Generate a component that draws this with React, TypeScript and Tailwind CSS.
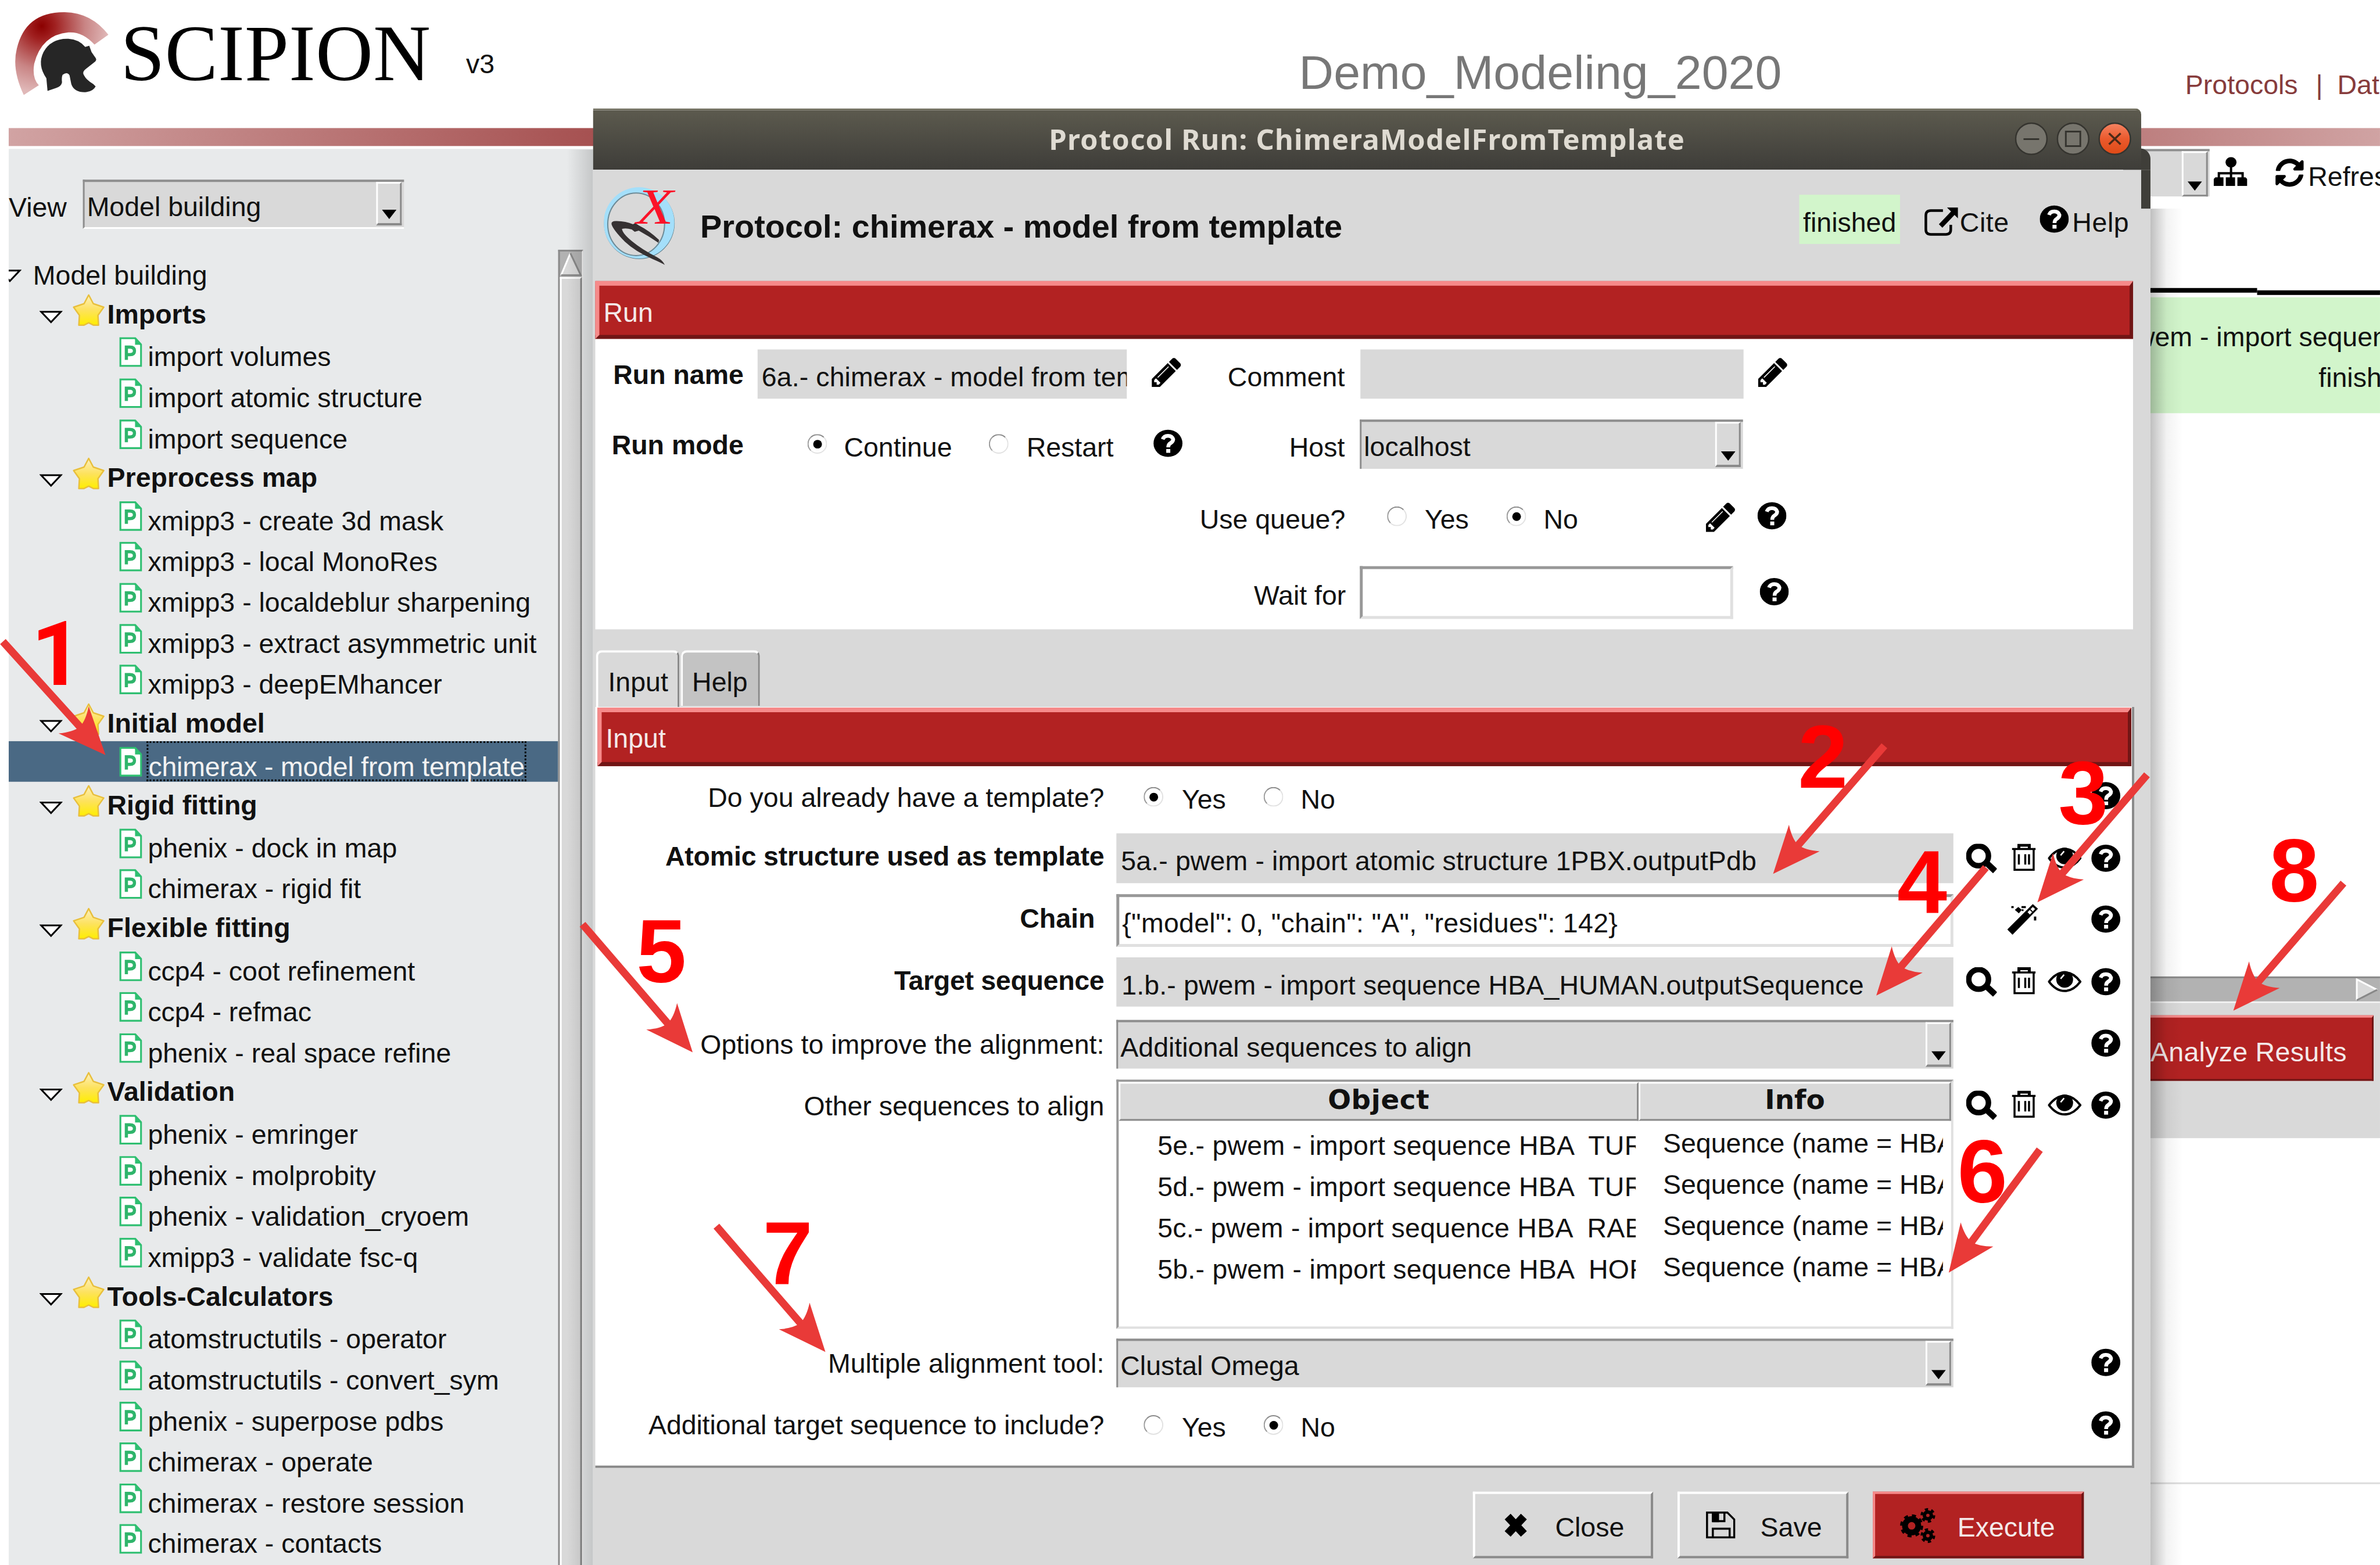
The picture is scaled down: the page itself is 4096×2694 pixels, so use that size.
import React from "react";
import { FaSyncAlt } from "react-icons/fa";

type Cls = { className?: string };

/* ---------- icons ---------- */

const Help = ({ className = "" }: Cls) => (
  <svg viewBox="0 -2 50 50" className={`h-[50px] w-[50px] shrink-0 ${className}`}>
    <ellipse cx="25" cy="23" rx="25" ry="23.500" fill="#000" />
    <path d="M16 16Q18 10 25 10T34 16Q34 20 29 23Q25.500 25 25.500 30" fill="none" stroke="#fff" strokeWidth="6.500" />
    <path d="M22 33H29V39.500H22Z" fill="#fff" />
  </svg>
);

const Pencil = ({ className = "" }: Cls) => (
  <svg viewBox="128 128 1536 1536" className={`h-[51px] w-[51px] shrink-0 ${className}`}>
    <path
      fill="#000"
      d="M491 1536l91-91-235-235-91 91v107h128v128h107zm523-928q0-22-22-22-10 0-17 7l-542 542q-7 7-7 17 0 22 22 22 10 0 17-7l542-542q7-7 7-17zm-54-192l416 416-832 832h-416v-416zm683 96q0 53-37 90l-166 166-416-416 166-165q36-38 90-38 53 0 91 38l235 234q37 39 37 91z"
    />
  </svg>
);

const Search = ({ className = "" }: Cls) => (
  <svg viewBox="0 0 53 51" className={`h-[51px] w-[53px] shrink-0 ${className}`} fill="none" stroke="#000">
    <ellipse cx="21.500" cy="21" rx="17" ry="17" strokeWidth="9.500" />
    <path d="M34 32L50 47" strokeWidth="10.500" />
  </svg>
);

const Trash = ({ className = "" }: Cls) => (
  <svg viewBox="0 0 41 47" className={`h-[47px] w-[41px] shrink-0 ${className}`} fill="none" stroke="#000" strokeWidth="3.500">
    <path d="M0 9H41M4.500 9V45H37.500V9M12 18V36M23 18V36M29.500 18V36" />
    <path d="M12 9V2.500H30V9" strokeWidth="5" />
  </svg>
);

const Eye = ({ className = "" }: Cls) => (
  <svg viewBox="0 0 58 40" className={`h-[40px] w-[58px] shrink-0 ${className}`}>
    <path d="M2 20Q14 4 29 4T56 20Q44 36 29 36T2 20Z" fill="#fff" stroke="#000" strokeWidth="4" />
    <circle cx="29" cy="16" r="14.500" fill="#000" />
    <path d="M22 15L28 8" stroke="#fff" strokeWidth="2.5" fill="none" />
  </svg>
);

const Wand = ({ className = "" }: Cls) => (
  <svg viewBox="0 0 53 53" className={`h-[53px] w-[53px] shrink-0 ${className}`}>
    <path d="M0 44L44 0L53 8L9 53Z" fill="#000" />
    <path d="M35 14L44 5L48 8.500L39 18Z" fill="#fff" />
    <path d="M39.500 9.500L43.500 13.500" stroke="#000" strokeWidth="2" />
    <path d="M19 5L25 10L20 16L13 10ZM7 3.500H11V7H7ZM24.500 3.500H32V7H24.500ZM46 21.500H50V28.500H46ZM25 9H28V12H25Z" fill="#000" />
  </svg>
);

const Gears = () => (
  <svg viewBox="0 0 62 62" className="h-[62px] w-[62px] shrink-0" fill="none" stroke="#000">
    <circle cx="20" cy="32" r="11.500" strokeWidth="10" />
    <circle cx="20" cy="32" r="17.500" strokeWidth="5" strokeDasharray="6.87 6.87" />
    <circle cx="48" cy="14" r="6" strokeWidth="6" />
    <circle cx="48" cy="14" r="10.500" strokeWidth="4.500" strokeDasharray="5.5 5.5" />
    <circle cx="48" cy="49" r="6" strokeWidth="6" />
    <circle cx="48" cy="49" r="10.500" strokeWidth="4.500" strokeDasharray="5.5 5.5" />
  </svg>
);

const Cite = () => (
  <svg viewBox="0 0 58 50" className="mt-[64px] ml-[42px] h-[50px] w-[58px] shrink-0">
    <path d="M32 6.500H11Q2.500 6.500 2.500 15V39Q2.500 47.500 11 47.500H37Q45.500 47.500 45.500 39V31" fill="none" stroke="#000" strokeWidth="4.500" />
    <path d="M39 1H58V20L52 14L31 36L25 30L46 8Z" fill="#000" />
  </svg>
);

const Sitemap = () => (
  <svg viewBox="0 0 58 50" className="mt-[14px] ml-[7px] h-[50px] w-[58px] shrink-0">
    <ellipse cx="30" cy="9" rx="9.500" ry="9" fill="#000" />
    <path d="M30 16V38M9 38V28H50V38" fill="none" stroke="#000" strokeWidth="4" />
    <path d="M3 35H17V50H0V38ZM21 35H37V50H21ZM41 35H55L58 38V50H41Z" fill="#000" />
  </svg>
);

const Cross = () => (
  <svg viewBox="0 0 40 40" className="h-[40px] w-[40px] shrink-0">
    <path d="M6 5L34 35M34 5L6 35" stroke="#000" strokeWidth="14" />
  </svg>
);

const Floppy = () => (
  <svg viewBox="0 0 51 47" className="h-[47px] w-[51px] shrink-0" fill="none" stroke="#000" strokeWidth="3.500">
    <path d="M2 2H37L49 14V45H2ZM12 45V30H41V45" />
    <path d="M12 2V17H32V2" />
    <path d="M13 3H21V17H13Z" fill="#000" />
  </svg>
);

const Star = () => (
  <svg viewBox="0 0 56 56" className="mt-[5px] h-[56px] w-[56px] shrink-0">
    <defs>
      <linearGradient id="star" x1="0" y1="0" x2="0" y2="1">
        <stop offset="0" stopColor="#fdf0c0" />
        <stop offset=".5" stopColor="#fde25e" />
        <stop offset="1" stopColor="#ffee00" />
      </linearGradient>
    </defs>
    <path
      d="M28 2L36 17L54 23L44 37L45 54L36 54L28 50L20 54L11 54L12 37L2 23L20 17Z"
      fill="url(#star)" stroke="#e8bf3c" strokeWidth="2.500" strokeLinejoin="round"
    />
  </svg>
);

const PFile = () => (
  <span className="mt-[10px] flex h-[51px] w-[39px] shrink-0">
    <svg viewBox="0 0 39 51" className="h-[51px] w-[39px]">
      <path d="M1.500 1.500H27L37.500 13V49.500H1.500Z" fill="#fff" stroke="#2fbf71" strokeWidth="3.500" />
      <path d="M27 1V13H38Z" fill="#2fbf71" />
      <path d="M12 39V17H18Q26 17 26 23.500T18 30H12" fill="none" stroke="#2fb56b" strokeWidth="5.500" />
    </svg>
  </span>
);

const Expander = ({ className = "" }: Cls) => (
  <svg viewBox="0 0 40 23" className={`h-[23px] w-[40px] shrink-0 ${className}`}>
    <path d="M3 2H37L20 20Z" fill="#fff" stroke="#000" strokeWidth="3" />
  </svg>
);

const Logo = () => (
  <svg viewBox="0 0 165 145" className="mt-[20px] ml-[24px] h-[145px] w-[165px] shrink-0">
    <defs>
      <radialGradient id="crest" gradientUnits="userSpaceOnUse" cx="48" cy="25" r="115">
        <stop offset="0" stopColor="#8b0000" />
        <stop offset=".2" stopColor="#a02020" />
        <stop offset=".65" stopColor="#c98585" />
        <stop offset="1" stopColor="#e0b8b8" />
      </radialGradient>
    </defs>
    <path d="M17 144Q-4 100 5 64Q20 0 88 1Q134 2 163 40L139 57Q118 34 94 36Q48 40 35 90Q31 115 43 127Z" fill="url(#crest)" />
    <path
      d="M58 137L56 115Q40 92 51 70Q64 46 94 47Q112 48 123 61L130 59L134 70L141 80Q144 84 138 88L124 99Q117 104 121 110Q125 118 137 125L141 129Q137 137 125 139Q104 140 99 125L96 110Q92 103 84 109Q82 113 83 122Q82 129 72 132Z"
      fill="#262626"
    />
  </svg>
);

const ChimeraLogo = () => (
  <svg viewBox="0 0 124 138" className="mt-[28px] ml-[19px] h-[138px] w-[124px] shrink-0">
    <ellipse cx="61" cy="64.500" rx="61" ry="61.500" fill="#5f7f8c" />
    <ellipse cx="60.500" cy="63.500" rx="61" ry="61.500" fill="#a4dffa" />
    <ellipse cx="55.500" cy="66" rx="49" ry="54" fill="#d9d9d9" stroke="#6d8a96" strokeWidth="2" />
    <path
      d="M13 66Q12 60 22 60.500Q38 61 50 66L54 64L60 68Q78 77 95 93L94 98Q78 87 60 77L53 79L48 75Q38 72 31 74Q32 82 48 95Q66 110 92 123Q101 128 105 136Q98 132 84 126Q54 113 36 96Q16 76 13 66Z"
      fill="#353132"
    />
    <text x="56" y="65" textLength="64" lengthAdjust="spacingAndGlyphs" className="fill-[#fb1228] font-['Liberation_Serif'] text-[86px] italic">
      X
    </text>
  </svg>
);

/* ---------- widgets ---------- */

const Label = ({ className = "", children }: React.PropsWithChildren<Cls>) => (
  <span className={`block shrink-0 text-right ${className}`}>{children}</span>
);

const Radio = ({ on, className = "" }: Cls & { on?: boolean }) => (
  <span
    className={`flex h-[34px] w-[34px] shrink-0 items-center justify-center rounded-full border-[2.5px] border-t-[#888] border-r-[#e2e2e2] border-b-[#e2e2e2] border-l-[#999] bg-white ${className}`}
  >
    {on && <span className="h-[15px] w-[15px] rounded-full bg-black" />}
  </span>
);

const Combo = ({ className = "", children }: React.PropsWithChildren<Cls>) => (
  <div className={`flex shrink-0 justify-between border-t-[4px] border-l-[3px] border-[#8e8e8e] bg-[#d9d9d9] ${className}`}>
    <span className="mt-[17px] ml-[4px]">{children}</span>
    <span className="mr-[4px] mb-[3px] flex w-[44px] items-end justify-center border-t-[3px] border-r-[3px] border-b-[4px] border-l-[3px] border-t-white border-r-[#8a8a8a] border-b-[#8a8a8a] border-l-white pb-[7px]">
      <svg viewBox="0 0 25 16" className="h-[16px] w-[25px]">
        <path d="M0 0H25L12.500 16Z" />
      </svg>
    </span>
  </div>
);

const Entry = ({ className = "", children }: React.PropsWithChildren<Cls>) => (
  <div className={`shrink-0 overflow-hidden bg-[#d9d9d9] pt-[22px] ${className}`}>{children}</div>
);

const Field = ({ className = "", children }: React.PropsWithChildren<Cls>) => (
  <div
    className={`h-[91px] shrink-0 border-[5px] border-t-[#989898] border-r-[#e0e0e0] border-b-[#e0e0e0] border-l-[#989898] bg-white pt-[19px] pl-[5px] ${className}`}
  >
    {children}
  </div>
);

const Banner = ({ className = "", children }: React.PropsWithChildren<Cls>) => (
  <div
    className={`border-t-[8px] border-r-[6px] border-b-[7px] border-l-[7px] border-t-[#f68a8a] border-r-[#701515] border-b-[#701515] border-l-[#f68a8a] bg-[#b22222] text-[#f4e9e9] ${className}`}
  >
    {children}
  </div>
);

const Tools = ({ className = "" }: Cls) => (
  <div className={`flex items-start ${className}`}>
    <Search className="ml-[22px]" />
    <Trash className="ml-[26px]" />
    <Eye className="mt-[5px] ml-[21px]" />
    <Help className="ml-[17px]" />
  </div>
);

const Button = ({ className = "", children }: React.PropsWithChildren<Cls>) => (
  <div className={`flex h-[115px] shrink-0 items-center border-[4px] ${className}`}>{children}</div>
);

/* ---------- sidebar ---------- */

const tree: [string, string[]][] = [
  ["Imports", ["import volumes", "import atomic structure", "import sequence"]],
  ["Preprocess map", ["xmipp3 - create 3d mask", "xmipp3 - local MonoRes", "xmipp3 - localdeblur sharpening", "xmipp3 - extract asymmetric unit", "xmipp3 - deepEMhancer"]],
  ["Initial model", ["chimerax - model from template"]],
  ["Rigid fitting", ["phenix - dock in map", "chimerax - rigid fit"]],
  ["Flexible fitting", ["ccp4 - coot refinement", "ccp4 - refmac", "phenix - real space refine"]],
  ["Validation", ["phenix - emringer", "phenix - molprobity", "phenix - validation_cryoem", "xmipp3 - validate fsc-q"]],
  ["Tools-Calculators", ["atomstructutils - operator", "atomstructutils - convert_sym", "phenix - superpose pdbs", "chimerax - operate", "chimerax - restore session", "chimerax - contacts"]],
];

const Sidebar = () => (
  <div className="ml-[15px] flex h-[2444px] w-[1009px] flex-col bg-[#e8eaeb]">
    <div className="flex h-[174px] shrink-0 items-start">
      <span className="mt-[75px] w-[128px] shrink-0">View</span>
      <Combo className="mt-[53px] h-[85px] w-[554px] border-b-[3px] border-b-white">Model building</Combo>
    </div>
    <div className="flex h-[2270px]">
      <div className="flex w-[948px] flex-col overflow-hidden">
        <div className="flex h-[70.64px] shrink-0">
          <Expander className="mt-[34px] -ml-[18px]" />
          <span className="mt-[18px] ml-[20px]">Model building</span>
        </div>
        {tree.map(([group, items]) => (
          <div key={group}>
            <div className="flex h-[70.64px]">
              <Expander className="mt-[34px] ml-[53px]" />
              <span className="ml-[17px] flex">
                <Star />
              </span>
              <b className="mt-[14px] ml-[4px]">{group}</b>
            </div>
            {items.map((item) => {
              const active = item === "chimerax - model from template";
              return (
                <div key={item} className={active ? "flex h-[70.64px] bg-[#4a6984] text-[#f2f2f2]" : "flex h-[70.64px]"}>
                  <span className="ml-[191px] flex">
                    <PFile />
                  </span>
                  <span
                    className={
                      active
                        ? "ml-[8px] h-[69px] border-[3px] border-dotted border-black pt-[15px] tracking-[-0.2px]"
                        : "mt-[18px] ml-[10px]"
                    }
                  >
                    {item}
                  </span>
                </div>
              );
            })}
          </div>
        ))}
      </div>
      <div className="flex w-[43px] flex-col border-t-[3px] border-r-[2px] border-l-[3px] border-t-[#8a8a8a] border-r-white border-l-[#8a8a8a] bg-[#b2b2b2]">
        <svg viewBox="0 0 38 44" className="h-[44px] w-[38px] shrink-0">
          <path d="M18 3L36 41H2Z" fill="#d9d9d9" />
          <path d="M18 3L2 41" stroke="#fff" strokeWidth="3" />
          <path d="M18 3L36 41H2" stroke="#888" strokeWidth="3" fill="none" />
        </svg>
        <div className="grow border-t-[3px] border-r-[3px] border-l-[3px] border-t-white border-r-[#888] border-l-white bg-[#d9d9d9]" />
      </div>
    </div>
  </div>
);

/* ---------- dialog ---------- */

const WinButtons = () => (
  <div className="flex gap-[15px]">
    <svg viewBox="0 0 57 57" className="h-[57px] w-[57px]">
      <circle cx="28.500" cy="28.500" r="27" fill="#77756d" stroke="#35342f" strokeWidth="2.500" />
      <path d="M15 29H42" stroke="#35342f" strokeWidth="3" />
    </svg>
    <svg viewBox="0 0 57 57" className="h-[57px] w-[57px]">
      <circle cx="28.500" cy="28.500" r="27" fill="#77756d" stroke="#35342f" strokeWidth="2.500" />
      <path d="M16 16H41V41H16Z" fill="none" stroke="#35342f" strokeWidth="3" />
    </svg>
    <svg viewBox="0 0 57 57" className="h-[57px] w-[57px]">
      <defs>
        <linearGradient id="close" x1="0" y1="0" x2="0" y2="1">
          <stop offset="0" stopColor="#f58463" />
          <stop offset=".5" stopColor="#ea5a2d" />
          <stop offset="1" stopColor="#df4a16" />
        </linearGradient>
      </defs>
      <circle cx="28.500" cy="28.500" r="27" fill="url(#close)" stroke="#35342f" strokeWidth="2.500" />
      <path d="M18.500 19L38.500 38M38.500 19L18.500 38" stroke="#4a2a18" strokeWidth="3.500" />
    </svg>
  </div>
);

const objects = ["5e.- pwem - import sequence HBA  TUR", "5d.- pwem - import sequence HBA  TUR", "5c.- pwem - import sequence HBA  RAB", "5b.- pwem - import sequence HBA  HOR"];

const Dialog = () => (
  <div className="absolute top-[187px] left-[1023px] w-[2687px]">
    <div className="absolute top-[71px] -left-[45px] h-[2443px] w-[45px] bg-gradient-to-r from-transparent to-black/15" />
    <div className="absolute top-[173px] left-[2687px] h-[2341px] w-[56px] bg-gradient-to-r from-black/25 via-black/5 to-transparent" />
    <div className="absolute top-[69px] left-[2640px] h-[104px] w-[47px] rounded-tr-[18px] bg-[#3f3e39]" />

    <div className="relative flex h-[106px] w-[2671px] items-center justify-center rounded-tr-[10px] border-t-[3px] border-[#6a6858] bg-gradient-to-b from-[#5c5a4e] to-[#3e3d39]">
      <span className="mb-[4px] font-['Noto_Sans'] text-[49px] font-bold tracking-[1.250px] text-[#dfdbd2]">
        Protocol Run: ChimeraModelFromTemplate
      </span>
      <div className="absolute top-[21px] left-[2453px]">
        <WinButtons />
      </div>
    </div>

    <div className="relative h-[2408px] bg-[#d9d9d9]">
      <div className="absolute top-0 right-0 h-[67px] w-[16px] bg-[#3f3e39]" />
      <div className="flex h-[192px] items-start">
        <ChimeraLogo />
        <b className="mt-[67px] ml-[42px] w-[1896px] shrink-0 text-[56px] leading-[62px]">Protocol: chimerax - model from template</b>
        <span className="mt-[43px] h-[85px] w-[174px] shrink-0 bg-[#d2f5cb] pt-[22px] text-center">finished</span>
        <Cite />
        <span className="mt-[65px] ml-[3px] w-[138px] shrink-0 tracking-[0.6px]">Cite</span>
        <Help className="mt-[60px]" />
        <span className="mt-[65px] ml-[6px] tracking-[0.6px]">Help</span>
      </div>

      <Banner className="ml-[4px] h-[100px] w-[2653px] pt-[20px] pl-[7px]">Run</Banner>
      <div className="ml-[4px] h-[501px] w-[2653px] bg-white">
        <div className="flex h-[139px] items-start">
          <Label className="mt-[36px] w-[256px] font-bold">Run name</Label>
          <Entry className="mt-[18px] ml-[24px] h-[85px] w-[637px] pl-[7px] tracking-[0.1px]">6a.- chimerax - model from template</Entry>
          <Pencil className="mt-[32px] ml-[43px]" />
          <Label className="mt-[40px] w-[282px]">Comment</Label>
          <Entry className="mt-[18px] ml-[27px] h-[85px] w-[661px]" />
          <Pencil className="mt-[32px] ml-[25px]" />
        </div>
        <div className="flex h-[120px] items-start">
          <Label className="mt-[18px] w-[256px] font-bold">Run mode</Label>
          <Radio on className="mt-[25px] ml-[110px]" />
          <span className="mt-[22px] ml-[29px] w-[250px]">Continue</span>
          <Radio className="mt-[25px]" />
          <span className="mt-[22px] ml-[31px] w-[219px]">Restart</span>
          <Help className="mt-[16px]" />
          <Label className="mt-[22px] w-[280px]">Host</Label>
          <Combo className="ml-[26px] h-[85px] w-[661px]">localhost</Combo>
        </div>
        <div className="flex h-[133px] items-start">
          <Label className="mt-[26px] w-[1294px]">Use queue?</Label>
          <Radio className="mt-[30px] ml-[72px]" />
          <span className="mt-[26px] ml-[31px] w-[141px]">Yes</span>
          <Radio on className="mt-[30px]" />
          <span className="mt-[26px] ml-[30px] w-[280px]">No</span>
          <Pencil className="mt-[23px]" />
          <Help className="mt-[21px] ml-[38px]" />
        </div>
        <div className="flex items-start">
          <Label className="mt-[25px] w-[1295px]">Wait for</Label>
          <Field className="ml-[24px] w-[644px]" />
          <Help className="mt-[19px] ml-[46px]" />
        </div>
      </div>

      <div className="mt-[36px] ml-[5px] flex h-[98px] items-start">
        <div className="h-[99px] w-[144px] rounded-t-[10px] border-t-[4px] border-r-[3px] border-l-[4px] border-t-white border-r-[#888] border-l-white pt-[25px] pl-[17px]">Input</div>
        <div className="ml-[3px] h-[96px] w-[136px] rounded-t-[10px] border-t-[4px] border-r-[3px] border-l-[3px] border-t-white border-r-[#888] border-l-white bg-[#c3c3c3] pt-[25px] pl-[16px]">Help</div>
      </div>
      <div className="relative ml-[4px] h-[1313px] w-[2655px] border-r-[4px] border-b-[4px] border-[#8a8a8a] bg-white">
        <Banner className="absolute top-[1px] ml-[4px] h-[101px] w-[2646px] pt-[19px] pl-[7px]">Input</Banner>
        <div className="h-[102px]" />
        <div className="flex h-[116px] items-start">
          <Label className="mt-[28px] w-[878px]">Do you already have a template?</Label>
          <Radio on className="mt-[36px] ml-[68px]" />
          <span className="mt-[31px] ml-[32px] w-[141px]">Yes</span>
          <Radio className="mt-[36px]" />
          <span className="mt-[31px] ml-[30px] w-[1364px]">No</span>
          <Help className="mt-[26px]" />
        </div>
        <div className="flex h-[105px] items-start">
          <Label className="mt-[14px] w-[878px] font-bold tracking-[-0.2px]">Atomic structure used as template</Label>
          <Entry className="ml-[21px] h-[86px] w-[1444px] pl-[8px] tracking-[0.12px]">5a.- pwem - import atomic structure 1PBX.outputPdb</Entry>
          <Tools className="mt-[18px]" />
        </div>
        <div className="flex h-[109px] items-start">
          <Label className="mt-[16px] w-[862px] font-bold">Chain</Label>
          <Field className="ml-[37px] w-[1444px] tracking-[0.3px]">{'{"model": 0, "chain": "A", "residues": 142}'}</Field>
          <Wand className="mt-[17px] ml-[93px]" />
          <Help className="mt-[18px] ml-[92px]" />
        </div>
        <div className="flex h-[108px] items-start">
          <Label className="mt-[14px] w-[878px] font-bold tracking-[-0.3px]">Target sequence</Label>
          <Entry className="ml-[21px] h-[85px] w-[1444px] pl-[9px] tracking-[0.12px]">1.b.- pwem - import sequence HBA_HUMAN.outputSequence</Entry>
          <Tools className="mt-[17px]" />
        </div>
        <div className="flex h-[103px] items-start">
          <Label className="mt-[16px] w-[878px]">Options to improve the alignment:</Label>
          <Combo className="ml-[21px] h-[84px] w-[1444px]">Additional sequences to align</Combo>
          <Help className="mt-[15px] ml-[238px]" />
        </div>
        <div className="flex h-[447px] items-start">
          <Label className="mt-[20px] w-[878px]">Other sequences to align</Label>
          <div className="ml-[21px] h-[430px] w-[1444px] shrink-0 border-[4px] border-t-[#989898] border-r-[#e0e0e0] border-b-[#e0e0e0] border-l-[#989898]">
            <div className="flex h-[67px] bg-[#d9d9d9] text-center font-['DejaVu_Sans'] text-[47px] leading-[56px] font-bold">
              <span className="w-[897px] border-[3px] border-t-white border-r-[#8a8a8a] border-b-[#8a8a8a] border-l-white tracking-[0.6px]">Object</span>
              <span className="w-[539px] border-[3px] border-t-white border-r-[#8a8a8a] border-b-[#8a8a8a] border-l-white">Info</span>
            </div>
            <div className="flex h-[350px] overflow-hidden pt-[8px] whitespace-pre">
              <div className="w-[892px] overflow-hidden pl-[67px] leading-[71px] tracking-[0.25px]">
                {objects.map((o) => (
                  <div key={o}>{o}</div>
                ))}
              </div>
              <div className="-mt-[4px] ml-[47px] w-[483px] overflow-hidden leading-[71px]">
                {objects.map((o) => (
                  <div key={o}>Sequence (name = HBA</div>
                ))}
              </div>
            </div>
          </div>
          <Tools className="mt-[19px]" />
        </div>
        <div className="flex h-[107px] items-start">
          <Label className="mt-[17px] w-[878px]">Multiple alignment tool:</Label>
          <Combo className="ml-[21px] h-[84px] w-[1444px]">Clustal Omega</Combo>
          <Help className="mt-[16px] ml-[238px]" />
        </div>
        <div className="flex items-start">
          <Label className="mt-[16px] w-[878px] tracking-[-0.1px]">Additional target sequence to include?</Label>
          <Radio className="mt-[25px] ml-[68px]" />
          <span className="mt-[20px] ml-[32px] w-[141px]">Yes</span>
          <Radio on className="mt-[25px]" />
          <span className="mt-[20px] ml-[30px] w-[1364px]">No</span>
          <Help className="mt-[17px]" />
        </div>
      </div>

      <div className="mt-[41px] ml-[1518px] flex">
        <Button className="w-[311px] gap-[48px] border-t-white border-r-[#8a8a8a] border-b-[#8a8a8a] border-l-white pl-[50px]">
          <Cross />
          <span className="mt-[7px]">Close</span>
        </Button>
        <Button className="ml-[42px] w-[295px] gap-[43px] border-t-white border-r-[#8a8a8a] border-b-[#8a8a8a] border-l-white pl-[45px]">
          <Floppy />
          <span className="mt-[7px]">Save</span>
        </Button>
        <Button className="ml-[42px] w-[364px] gap-[37px] border-t-[#f68a8a] border-r-[#701515] border-b-[#701515] border-l-[#f68a8a] bg-[#b22222] pl-[43px]">
          <Gears />
          <span className="mt-[7px] text-[#f4e9e9]">Execute</span>
        </Button>
      </div>
    </div>
  </div>
);

/* ---------- workflow area on the right ---------- */

const Workspace = () => (
  <div className="flex h-[2444px] w-[412px] flex-col overflow-hidden bg-white">
    <div className="flex h-[240px] shrink-0 items-start">
      <div className="flex h-[82px] w-[118px] shrink-0 justify-end border-t-[4px] border-[#8e8e8e] bg-[#d9d9d9]">
        <span className="mr-[3px] flex w-[45px] items-end justify-center border-[3px] border-t-white border-r-[#8a8a8a] border-b-[#8a8a8a] border-l-white pb-[7px]">
          <svg viewBox="0 0 25 16" className="h-[16px] w-[25px]">
            <path d="M0 0H25L12.500 16Z" />
          </svg>
        </span>
      </div>
      <Sitemap />
      <FaSyncAlt className="mt-[16px] ml-[47px] h-[50px] w-[52px] shrink-0 text-black" />
      <span className="mt-[22px] ml-[6px]">Refresh</span>
    </div>
    <div className="flex h-[16px] shrink-0">
      <span className="h-[8px] w-[200px] bg-black" />
      <span className="mt-[4px] h-[8px] w-[212px] bg-black" />
    </div>
    <div className="h-[200px] shrink-0 bg-[#d2f5cb] pt-[42px]">
      <div className="ml-[-36px] leading-[52px]">pwem - import sequence</div>
      <div className="mt-[19px] ml-[306px] leading-[52px]">finished</div>
    </div>
    <div className="mt-[972px] flex h-[46px] shrink-0 justify-end border-t-[3px] border-b-[3px] border-t-[#8a8a8a] border-b-[#f4f4f4] bg-[#b2b2b2]">
      <svg viewBox="0 0 40 40" className="mr-[3px] h-[40px] w-[40px]">
        <path d="M3 1L38 20L3 38Z" fill="#d9d9d9" />
        <path d="M3 38V2L38 20" stroke="#fff" strokeWidth="3" fill="none" />
        <path d="M38 20L3 38" stroke="#888" strokeWidth="3" />
      </svg>
    </div>
    <div className="h-[233px] shrink-0 bg-[#d9d9d9] pt-[21px]">
      <div className="h-[113px] w-[401px] border-t-[4px] border-r-[3px] border-b-[3px] border-t-[#f68a8a] border-r-[#701515] border-b-[#701515] bg-[#b22222] pt-[33px] pl-[16px] tracking-[0.3px] text-[#f4e9e9]">
        Analyze Results
      </div>
    </div>
    <div className="mt-[594px] h-[3px] shrink-0 bg-[#dcdcdc]" />
  </div>
);

/* ---------- numbered callouts drawn over the windows ---------- */

const callouts = [
  { n: 1, x: 98, y: 1182, from: [5, 1107], to: [182, 1303] },
  { n: 2, x: 3145, y: 1359, from: [3251, 1287], to: [3059, 1508] },
  { n: 3, x: 3594, y: 1421, from: [3704, 1337], to: [3515, 1557] },
  { n: 4, x: 3316, y: 1576, from: [3426, 1497], to: [3237, 1718] },
  { n: 5, x: 1141, y: 1695, from: [1005, 1595], to: [1195, 1816] },
  { n: 6, x: 3420, y: 2075, from: [3519, 1984], to: [3362, 2196] },
  { n: 7, x: 1359, y: 2216, from: [1236, 2116], to: [1424, 2333] },
  { n: 8, x: 3958, y: 1556, from: [4043, 1524], to: [3853, 1744] },
];

const Callouts = () => (
  <svg viewBox="0 0 4106 2701" className="absolute top-0 left-0 h-[2701px] w-[4106px]">
    {callouts.map(({ n, x, y, from: [x1, y1], to: [x2, y2] }) => {
      const angle = (Math.atan2(y2 - y1, x2 - x1) * 180) / Math.PI;
      const length = Math.hypot(x2 - x1, y2 - y1);
      return (
        <g key={n}>
          <text
            x={x}
            y={y}
            textAnchor="middle"
            className={
              n === 1
                ? "fill-[#ff0000] font-['Roboto'] text-[154px] font-bold"
                : "fill-[#ff0000] font-['Liberation_Sans'] text-[155px] font-bold"
            }
          >
            {n}
          </text>
          <g transform={`translate(${x2} ${y2}) rotate(${angle})`} className="fill-[#e93a38]">
            <path d={`M${-length} -6.500H-60V6.500H${-length}Z`} />
            <path d="M0 0L-82 -35Q-67 -15 -66 0Q-67 15 -82 35Z" />
          </g>
        </g>
      );
    })}
  </svg>
);

export default function App() {
  return (
    <div className="h-[2694px] w-[4096px] overflow-hidden bg-white">
      <div className="relative h-[2701px] w-[4106px] origin-top-left scale-[0.99756] overflow-hidden bg-white font-['Liberation_Sans',sans-serif] text-[46.600px] leading-[52px] whitespace-nowrap text-[#111]">
        <div className="flex h-[221px] items-start">
          <Logo />
          <span className="mt-[12px] ml-[19px] w-[587px] shrink-0 font-['Liberation_Serif'] text-[137px] leading-[160px] tracking-[0.3px] text-black">SCIPION</span>
          <span className="mt-[84px] ml-[9px] w-[1437px] shrink-0">v3</span>
          <span className="mt-[79px] w-[1529px] shrink-0 text-[82.600px] leading-[92px] tracking-[0.1px] text-[#777]">Demo_Modeling_2020</span>
          <span className="mt-[120px] text-[#873c3c]">Protocols</span>
          <span className="mt-[120px] ml-[31px] text-[#873c3c]">|</span>
          <span className="mt-[120px] ml-[25px] text-[#873c3c]">Data</span>
        </div>
        <div className="ml-[15px] h-[31px] bg-[linear-gradient(90deg,#d1a3a3_0px,#a65151_1008px,#8f2020_2000px,#bd7f7f_3679px,#d0a3a3_4091px)]" />
        <div className="flex justify-between pt-[5px]">
          <Sidebar />
          <Workspace />
        </div>
        <Dialog />
        <Callouts />
      </div>
    </div>
  );
}
